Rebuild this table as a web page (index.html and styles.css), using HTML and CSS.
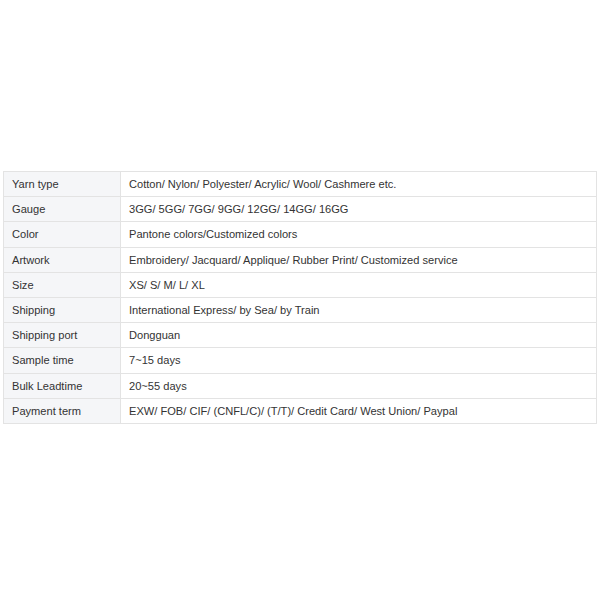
FILE: index.html
```html
<!DOCTYPE html>
<html>
<head>
<meta charset="utf-8">
<link rel="stylesheet" href="styles.css">
</head>
<body>
<div class="page">
<table class="spec">
<tr><td class="k">Yarn type</td><td class="v">Cotton/ Nylon/ Polyester/ Acrylic/ Wool/ Cashmere etc.</td></tr>
<tr><td class="k">Gauge</td><td class="v">3GG/ 5GG/ 7GG/ 9GG/ 12GG/ 14GG/ 16GG</td></tr>
<tr><td class="k">Color</td><td class="v">Pantone colors/Customized colors</td></tr>
<tr><td class="k">Artwork</td><td class="v">Embroidery/ Jacquard/ Applique/ Rubber Print/ Customized service</td></tr>
<tr><td class="k">Size</td><td class="v">XS/ S/ M/ L/ XL</td></tr>
<tr><td class="k">Shipping</td><td class="v">International Express/ by Sea/ by Train</td></tr>
<tr><td class="k">Shipping port</td><td class="v">Dongguan</td></tr>
<tr><td class="k">Sample time</td><td class="v">7~15 days</td></tr>
<tr><td class="k">Bulk Leadtime</td><td class="v">20~55 days</td></tr>
<tr><td class="k">Payment term</td><td class="v">EXW/ FOB/ CIF/ (CNFL/C)/ (T/T)/ Credit Card/ West Union/ Paypal</td></tr>
</table>
</div>
</body>
</html>
```
FILE: styles.css
```css
html, body { margin: 0; padding: 0; background: #fff; }
.page { padding: 171px 3px 0 3px; }
.spec {
  width: 594px;
  border-collapse: collapse;
  font-family: "Liberation Sans", Arial, sans-serif;
  font-size: 11.1px;
  color: #333;
}
.spec td {
  border: 1px solid #e3e3e3;
  height: 25.2px;
  padding: 0 0 0 8px;
  vertical-align: middle;
  box-sizing: border-box;
}
.spec td.k { width: 117px; background: #f5f6f8; }
.spec td.v { background: #fff; }
```
